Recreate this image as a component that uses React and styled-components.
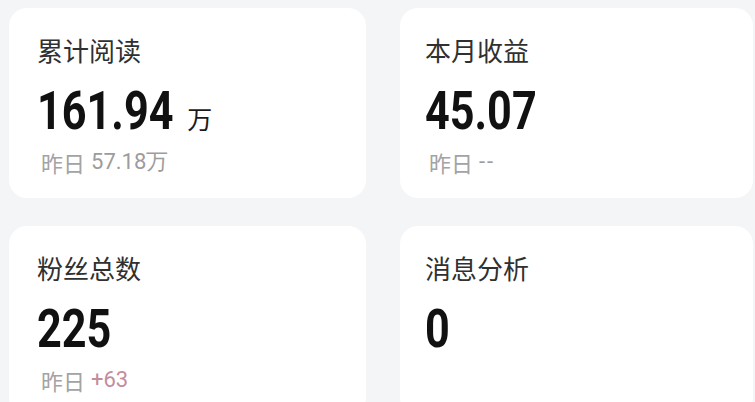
import React from "react";
import styled, { createGlobalStyle } from "styled-components";

const Global = createGlobalStyle`
  html, body { margin: 0; padding: 0; background: #f4f5f7; }
  body { font-family: "Noto Sans CJK SC", "Noto Sans", sans-serif; }
`;

const Page = styled.div`
  width: 755px;
  height: 402px;
  overflow: hidden;
  box-sizing: border-box;
  padding: 8px 2px 0 9px;
  display: grid;
  grid-template-columns: 357px 353px;
  grid-auto-rows: 190px;
  column-gap: 34px;
  row-gap: 28px;
  background: #f4f5f7;
`;

const Card = styled.div`
  background: #ffffff;
  border-radius: 18px;
  padding: 27px 0 0 ${(p) => (p.$right ? 25 : 28)}px;
  display: flex;
  flex-direction: column;
  box-sizing: border-box;
`;

const Label = styled.div`
  font-family: "Noto Sans CJK SC", sans-serif;
  font-size: 26px;
  line-height: 30px;
  color: #303030;
`;

const ValueRow = styled.div`
  margin-top: 19px;
  display: flex;
  align-items: baseline;
  height: 54px;
`;

const SCALE = 0.8;
const SIZE = 54;

const Value = styled.span`
  display: inline-block;
  font-family: Roboto, "Liberation Sans", sans-serif;
  font-weight: 700;
  font-size: ${SIZE}px;
  line-height: ${SIZE}px;
  color: #111111;
  transform: scaleX(${SCALE});
  transform-origin: left center;
`;

const Unit = styled.span`
  font-family: "Noto Sans CJK SC", sans-serif;
  font-size: 25px;
  color: #1a1a1a;
  margin-left: 13px;
`;

const Sub = styled.div`
  margin-top: 12px;
  padding-left: 4px;
  font-family: "Noto Sans CJK SC", sans-serif;
  font-size: 22px;
  line-height: 24px;
  color: #a3a3a3;
  display: flex;
  gap: 6px;
`;

const SubNum = styled.span`
  font-family: Roboto, "Liberation Sans", sans-serif;
  color: ${(p) => (p.$accent ? "#c48d9b" : "#9c9c9c")};
  letter-spacing: ${(p) => (p.$spaced ? "2px" : "0")};
`;

const stats = [
  { label: "累计阅读", value: "161.94", unit: "万", sub: "57.18万" },
  { label: "本月收益", value: "45.07", sub: "--", right: true },
  { label: "粉丝总数", value: "225", sub: "+63", accent: true },
  { label: "消息分析", value: "0", right: true },
];

// Width lost by the horizontal scale, estimated from Roboto's advances
function scaledShrink(text) {
  let w = 0;
  for (const ch of text) w += ch === "." ? 0.27 * SIZE : 0.562 * SIZE;
  return -(1 - SCALE) * w;
}

export default function App() {
  return (
    <>
      <Global />
      <Page>
        {stats.map((s) => (
          <Card key={s.label} $right={s.right}>
            <Label>{s.label}</Label>
            <ValueRow>
              <Value style={{ marginRight: scaledShrink(s.value) }}>{s.value}</Value>
              {s.unit && <Unit>{s.unit}</Unit>}
            </ValueRow>
            {s.sub && (
              <Sub>
                <span>昨日</span>
                <SubNum $accent={s.accent} $spaced={s.sub === "--"}>
                  {s.sub}
                </SubNum>
              </Sub>
            )}
          </Card>
        ))}
      </Page>
    </>
  );
}
